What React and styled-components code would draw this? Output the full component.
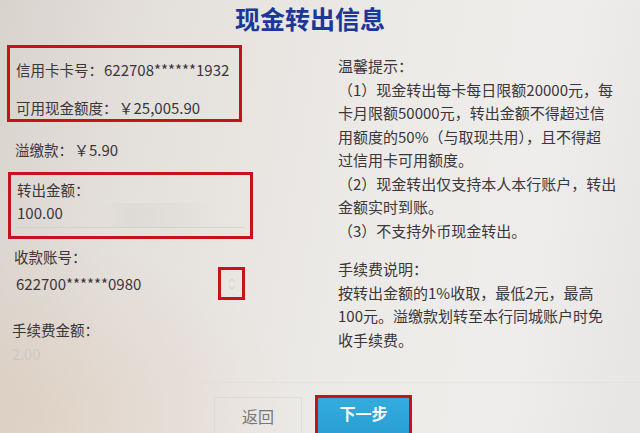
import React from 'react';
import styled, { createGlobalStyle } from 'styled-components';

const GlobalStyle = createGlobalStyle`
  html, body {
    margin: 0;
    padding: 0;
    background: #e6e2de;
  }
  body {
    font-family: 'Noto Sans CJK SC', 'Noto Sans', sans-serif;
  }
`;

const Screen = styled.div`
  position: relative;
  width: 640px;
  height: 433px;
  overflow: hidden;
  display: flex;
  flex-direction: column;
  color: #3a363a;
  background:
    radial-gradient(ellipse at 6% 96%, rgba(214, 170, 130, 0.22), rgba(214, 170, 130, 0) 30%),
    linear-gradient(100deg, #d9d3cd 0%, #e4e0dc 22%, #eceae7 55%, #efedeb 80%, #e7e5e3 100%);
`;

const Title = styled.h1`
  margin: 0;
  height: 36px;
  padding-right: 20px;
  display: flex;
  align-items: center;
  justify-content: center;
  font-size: 25px;
  font-weight: 700;
  color: #1b379a;
`;

const Body = styled.div`
  display: flex;
  flex: 1;
`;

const LeftCol = styled.div`
  width: 270px;
  padding-left: 7px;
  padding-top: 9px;
  display: flex;
  flex-direction: column;
  font-size: 14.5px;
`;

const RedBox = styled.div`
  border: 3px solid #c5121d;
  width: ${(p) => p.$w}px;
  padding: ${(p) => p.$pad};
  margin-top: ${(p) => p.$mt || 0}px;
  margin-left: ${(p) => p.$ml || 0}px;
  box-sizing: border-box;
  display: flex;
  flex-direction: column;
  gap: ${(p) => p.$gap}px;
`;

const Line = styled.div`
  height: 20px;
  line-height: 20px;
  white-space: nowrap;
  margin-top: ${(p) => p.$mt || 0}px;
  padding-left: ${(p) => p.$pl || 0}px;
  color: ${(p) => (p.$muted ? '#cdc9c6' : 'inherit')};
`;

const Value = styled.span`
  margin-left: 1px;
  font-size: 15px;
`;

const InputLine = styled.div`
  height: 20px;
  line-height: 20px;
  width: 228px;
  font-size: 15px;
  border-bottom: 1px solid rgba(200, 196, 192, 0.45);
  padding-bottom: 4px;
  background: linear-gradient(90deg, transparent 38%, rgba(215, 212, 208, 0.5) 50%, transparent 90%);
`;

const SelectRow = styled.div`
  display: flex;
  align-items: center;
  justify-content: space-between;
  width: 238px;
  height: 33px;
  padding-left: 9px;
  box-sizing: border-box;
  font-size: 15px;
`;

const Arrow = styled.div`
  width: 27px;
  height: 33px;
  box-sizing: border-box;
  border: 3px solid #c5121d;
  display: flex;
  align-items: center;
  justify-content: center;
`;

const RightCol = styled.div`
  flex: 1;
  padding-left: 61px;
  padding-top: 18px;
  font-size: 15px;
`;

const Note = styled.div`
  line-height: 23.5px;
  white-space: nowrap;
  margin-top: ${(p) => p.$mt || 0}px;
`;

const Footer = styled.div`
  height: 50px;
  display: flex;
  align-items: flex-end;
  gap: 13px;
  border-top: 1px solid rgba(220, 217, 213, 0.4);
  margin-left: 200px;
  padding-left: 14px;
`;

const GhostButton = styled.button`
  width: 88px;
  height: 38px;
  border: 1px solid rgba(210, 206, 202, 0.4);
  background: transparent;
  font-family: inherit;
  font-size: 16px;
  color: #7a7678;
  margin-bottom: -2px;
`;

const NextWrap = styled.div`
  border: 3px solid #c5121d;
  border-bottom: none;
  width: 97px;
  height: 38px;
  box-sizing: border-box;
`;

const NextButton = styled.button`
  width: 100%;
  height: 100%;
  border: none;
  background: linear-gradient(180deg, #33acdd 0%, #2a9fd5 100%);
  color: #fff;
  font-family: inherit;
  font-size: 16px;
  font-weight: 700;
  padding-bottom: 6px;
`;

const notes = [
  '温馨提示：',
  '（1）现金转出每卡每日限额20000元，每',
  '卡月限额50000元，转出金额不得超过信',
  '用额度的50%（与取现共用），且不得超',
  '过信用卡可用额度。',
  '（2）现金转出仅支持本人本行账户，转出',
  '金额实时到账。',
  '（3）不支持外币现金转出。',
];

const fees = [
  '手续费说明：',
  '按转出金额的1%收取，最低2元，最高',
  '100元。溢缴款划转至本行同城账户时免',
  '收手续费。',
];

export default function App() {
  return (
    <>
      <GlobalStyle />
      <Screen>
        <Title>现金转出信息</Title>
        <Body>
          <LeftCol>
            <RedBox $w={235} $pad="12px 0 1px 6px" $gap={18}>
              <Line>
                信用卡卡号：<Value>622708******1932</Value>
              </Line>
              <Line>
                可用现金额度：<Value>￥25,005.90</Value>
              </Line>
            </RedBox>
            <Line $mt={18} $pl={8}>
              溢缴款：<Value>￥5.90</Value>
            </Line>
            <RedBox $w={245} $pad="5px 0 8px 6px" $gap={3} $mt={12} $ml={1}>
              <Line>转出金额：</Line>
              <InputLine>100.00</InputLine>
            </RedBox>
            <Line $mt={8} $pl={7}>收款账号：</Line>
            <SelectRow>
              <span>622700******0980</span>
              <Arrow>
                <svg width="8" height="14" viewBox="0 0 8 14">
                  <path d="M1 5 L4 2 L7 5" fill="none" stroke="#d9d5d2" strokeWidth="1.4" />
                  <path d="M1 9 L4 12 L7 9" fill="none" stroke="#d9d5d2" strokeWidth="1.4" />
                </svg>
              </Arrow>
            </SelectRow>
            <Line $mt={20} $pl={5}>手续费金额：</Line>
            <Line $mt={4} $pl={5} $muted>2.00</Line>
          </LeftCol>
          <RightCol>
            {notes.map((t, i) => (
              <Note key={i}>{t}</Note>
            ))}
            {fees.map((t, i) => (
              <Note key={i} $mt={i === 0 ? 15 : 0}>
                {t}
              </Note>
            ))}
          </RightCol>
        </Body>
        <Footer>
          <GhostButton>返回</GhostButton>
          <NextWrap>
            <NextButton>下一步</NextButton>
          </NextWrap>
        </Footer>
      </Screen>
    </>
  );
}
